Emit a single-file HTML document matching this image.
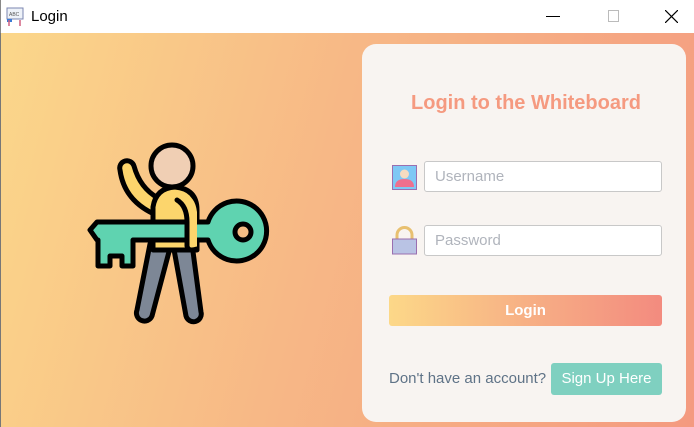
<!DOCTYPE html>
<html><head><style>
*{margin:0;padding:0;box-sizing:border-box}
body{width:694px;height:427px;overflow:hidden;font-family:"Liberation Sans",sans-serif;position:relative;background:#fff}
.tb{position:absolute;left:0;top:0;width:694px;height:33px;background:#fff;border-left:1px solid #888}
.tb .t{position:absolute;left:30px;top:8px;font-size:15px;color:#000}
.bg{position:absolute;left:0;top:33px;width:694px;height:394px;background:linear-gradient(105deg,#fbd78a 0%,#f7b886 45%,#f49a80 100%);border-left:1px solid #777}
.panel{position:absolute;left:362px;top:44px;width:324px;height:378px;background:#f8f4f1;border-radius:14px}
h1{position:absolute;left:48px;width:232px;top:48px;text-align:center;font-size:20px;color:#f59a80;font-weight:bold;white-space:nowrap}
.in{position:absolute;left:62px;width:238px;height:31px;background:#fff;border:1px solid #c8c8c8;border-radius:3px;font-size:15px;color:#b0b4bc;padding:6px 10px}
.btn{position:absolute;left:27px;top:251px;width:273px;height:31px;border-radius:3px;background:linear-gradient(90deg,#fcd888,#f7b085 50%,#f38b7f);color:#fff;font-weight:bold;font-size:15px;text-align:center;line-height:31px}
.q{position:absolute;left:27px;top:326px;font-size:15px;color:#5f7387}
.su{position:absolute;left:189px;top:319px;width:111px;height:32px;background:#7fd0c0;border-radius:3px;color:#fff;font-size:15px;text-align:center;line-height:32px}
</style></head><body>
<div class="tb">
<svg style="position:absolute;left:5px;top:7px" width="18" height="20" viewBox="0 0 18 20"><rect x="1" y="1" width="16" height="11" fill="#eef2f8" stroke="#7b86b0"/><text x="3" y="9" font-size="5" fill="#555">ABC</text><rect x="1" y="12" width="5" height="3" fill="#3a7bd5"/><path d="M3 13v6M14 13v6" stroke="#d06080" stroke-width="1.5"/></svg>
<div class="t">Login</div>
<div style="position:absolute;left:545px;top:16px;width:14px;height:1px;background:#000"></div>
<div style="position:absolute;left:607px;top:10px;width:11px;height:12px;border:1px solid #bbb"></div>
<svg style="position:absolute;left:664px;top:10px" width="13" height="13"><path d="M0 0L13 13M13 0L0 13" stroke="#000" stroke-width="1.2"/></svg>
</div>
<div class="bg"></div>
<svg style="position:absolute;left:80px;top:140px" width="200" height="190" viewBox="80 140 200 190">
<g stroke="#000" stroke-width="5" stroke-linejoin="round" stroke-linecap="round">
<path d="M150 244 L137 310 A7 7 0 0 0 152 316 L170 248 Z" fill="#7d8796"/>
<path d="M173 244 L186 316 A7 7 0 0 0 201 312 L192 244 Z" fill="#7d8796"/>
<path d="M120 170 A7 7 0 0 1 134 166 Q140 188 158 198 L154 214 Q124 200 120 170Z" fill="#fcd56c"/>
<path d="M153 250 L153 207 Q156 188 175 187 Q197 189 197 210 L197 250 Z" fill="#fcd56c"/>
<path d="M90 230 L97 222 L208 222 A30 30 0 1 1 208 240 L133 240 L133 266 L122 266 L122 256 L110 256 L110 266 L98 266 L98 240 L97 240 Z" fill="#5fd3b0"/>
<circle cx="243" cy="232" r="8" fill="#f5bc84"/>
<path d="M177 200 Q187 206 187 222 L187 244 Q187 252 195 250 L197 248 L197 212 Q195 196 184 194 Z" fill="#fcd56c" stroke="none"/>
<path d="M177 200 Q187 206 187 222 L187 246 Q188 252 197 249" fill="none"/>
<circle cx="172" cy="166" r="21" fill="#f0cfb4"/>
</g></svg>
<div class="panel">
<h1>Login to the Whiteboard</h1>
<svg style="position:absolute;left:30px;top:121px" width="25" height="25"><rect x="0.5" y="0.5" width="24" height="24" fill="#7ec8f5" stroke="#9a6fb0"/><circle cx="12.5" cy="9" r="4.5" fill="#f6dcc0"/><path d="M3 22 Q3 14 12.5 14 Q22 14 22 22Z" fill="#ef6f8e"/></svg>
<div class="in" style="top:117px">Username</div>
<svg style="position:absolute;left:30px;top:182px" width="25" height="29"><path d="M5 14 V9 A7.5 7.5 0 0 1 20 9 V14" fill="none" stroke="#e8c070" stroke-width="3"/><rect x="0.5" y="13" width="24" height="15" fill="#b9c3e4" stroke="#9a6fb0"/></svg>
<div class="in" style="top:181px">Password</div>
<div class="btn">Login</div>
<div class="q">Don't have an account?</div>
<div class="su">Sign Up Here</div>
</div>
</body></html>
